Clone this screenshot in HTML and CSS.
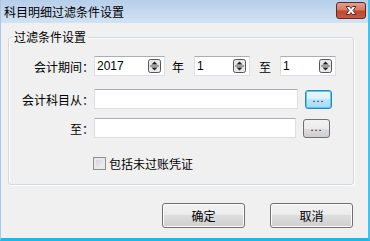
FILE: index.html
```html
<!DOCTYPE html>
<html>
<head>
<meta charset="utf-8">
<link rel="stylesheet" href="styles.css">
</head>
<body>
<div class="window">
  <div class="titlebar">
    <span class="title">科目明细过滤条件设置</span>
    <div class="close"><svg width="18" height="11" viewBox="0 0 18 11"><path d="M4 1.5 L7.5 1.5 L9 3.5 L10.5 1.5 L14 1.5 L11 5.5 L14 9.5 L10.5 9.5 L9 7.5 L7.5 9.5 L4 9.5 L7 5.5 Z" fill="#fff" stroke="#5a2a24" stroke-width="1" stroke-linejoin="round"/></svg></div>
  </div>
  <div class="client">
    <fieldset class="group">
      <legend>过滤条件设置</legend>
      <div class="row r1">
        <span class="label">会计期间：</span>
        <div class="spin w70"><span class="val">2017</span><span class="arrows"><svg width="13" height="14" viewBox="0 0 13 14"><rect x="0.5" y="0.5" width="12" height="13" rx="2" fill="#e8e8e8" stroke="#555"/><line x1="2" y1="7" x2="11" y2="7" stroke="#555"/><path d="M3.5 5.5 L6.5 2.5 L9.5 5.5 Z" fill="#222"/><path d="M3.5 8.5 L6.5 11.5 L9.5 8.5 Z" fill="#222"/></svg></span></div>
        <span class="unit">年</span>
        <div class="spin w55"><span class="val">1</span><span class="arrows"><svg width="13" height="14" viewBox="0 0 13 14"><rect x="0.5" y="0.5" width="12" height="13" rx="2" fill="#e8e8e8" stroke="#555"/><line x1="2" y1="7" x2="11" y2="7" stroke="#555"/><path d="M3.5 5.5 L6.5 2.5 L9.5 5.5 Z" fill="#222"/><path d="M3.5 8.5 L6.5 11.5 L9.5 8.5 Z" fill="#222"/></svg></span></div>
        <span class="unit to">至</span>
        <div class="spin w55"><span class="val">1</span><span class="arrows"><svg width="13" height="14" viewBox="0 0 13 14"><rect x="0.5" y="0.5" width="12" height="13" rx="2" fill="#e8e8e8" stroke="#555"/><line x1="2" y1="7" x2="11" y2="7" stroke="#555"/><path d="M3.5 5.5 L6.5 2.5 L9.5 5.5 Z" fill="#222"/><path d="M3.5 8.5 L6.5 11.5 L9.5 8.5 Z" fill="#222"/></svg></span></div>
      </div>
      <div class="row r2">
        <span class="label">会计科目从：</span>
        <div class="input w204"></div>
        <div class="dots focus">...</div>
      </div>
      <div class="row r3">
        <span class="label">至：</span>
        <div class="input w202"></div>
        <div class="dots">...</div>
      </div>
      <div class="row r4">
        <span class="check"></span>
        <span class="checktext">包括未过账凭证</span>
      </div>
    </fieldset>
    <div class="buttons">
      <div class="btn">确定</div>
      <div class="btn">取消</div>
    </div>
  </div>
</div>
</body>
</html>
```
FILE: styles.css
```css
* { box-sizing: border-box; }
html, body { margin: 0; padding: 0; }
body {
  width: 370px; height: 241px; overflow: hidden;
  font-family: "Noto Sans CJK SC", "Noto Sans", sans-serif;
  font-size: 12px; color: #000;
  background: #f0f0f0;
}
.window {
  width: 370px; height: 241px;
  display: flex; flex-direction: column;
  border-left: 1px solid #a6c6ec;
  border-right: 2px solid #40c4ee;
  border-bottom: 3px solid #1bb8e8;
  box-shadow: inset 0 -1px 0 #9cd0f0;
}
.titlebar {
  height: 23px;
  display: flex; align-items: center; justify-content: space-between;
  background: linear-gradient(#b7cfea, #d2e2f4);
  padding-left: 3px; padding-right: 2px;
}
.title { font-size: 12px; line-height: 14px; color: #000; }
.close {
  width: 30px; height: 17px; margin-top: -3px;
  border: 1px solid #5e2a24; border-radius: 3px;
  background: linear-gradient(#e3a08f 0%, #d67a64 45%, #c0482f 55%, #c55a42 100%);
  display: flex; align-items: center; justify-content: center;
}
.client {
  flex: 1; background: #f0f0f0;
  padding: 7px 14px 0 7px;
  display: flex; flex-direction: column;
}
.group {
  margin: 0; padding: 0 0 0 0;
  height: 155px;
  border: 1px solid #d3d8dc; border-radius: 3px;
  box-shadow: inset 1px 1px 0 #fff, 1px 1px 0 #fff;
}
.group legend {
  padding: 0 2px; margin-left: 3px;
  font-size: 12px; line-height: 14px;
}
.row { display: flex; align-items: center; }
.label { width: 85px; text-align: right; padding-right: 0; white-space: nowrap; }
.r1 { margin-top: 12px; height: 20px; }
.r2 { margin-top: 13px; height: 20px; }
.r3 { margin-top: 9px; height: 20px; }
.r4 { margin-top: 17px; padding-left: 84px; }
.spin, .input {
  height: 20px; background: #fff;
  border: 1px solid #dcdfe3; border-top-color: #abadb3;
  display: flex; align-items: center; justify-content: space-between;
}
.spin { padding-left: 2px; padding-right: 3px; font-family: "Liberation Sans", sans-serif; font-size: 12px; }
.arrows { display: flex; }
.w70 { width: 71px; }
.w55 { width: 56px; }
.w204 { width: 204px; }
.w202 { width: 202px; }
.unit { margin: 0 10px 0 7px; }
.unit.to { margin: 0 9px 0 9px; }
.dots {
  width: 27px; height: 19px; margin-left: 7px;
  border: 1px solid #707070; border-radius: 3px;
  background: linear-gradient(#f2f2f2 0%, #ebebeb 50%, #dddddd 50%, #cfcfcf 100%);
  font-family: "Liberation Sans", sans-serif; font-size: 11px;
  display: flex; align-items: center; justify-content: center;
  letter-spacing: 1px; line-height: 1; padding-bottom: 1px;
}
.dots.focus {
  border-color: #3c7fb1;
  box-shadow: inset 0 0 0 1px #48d0f6;
  background: linear-gradient(#eaf6fd 0%, #d9f0fc 50%, #bee6fd 50%, #a7d9f5 100%);
}
.check {
  width: 13px; height: 13px;
  border: 1px solid #8e8f8f;
  background: linear-gradient(135deg, #cbcfd5, #f6f6f6);
  box-shadow: inset 0 0 0 2px #e8e8e8;
}
.checktext { margin-left: 3px; }
.buttons {
  display: flex; justify-content: flex-end; gap: 25px;
  margin-top: 18px; padding-right: 1px;
}
.btn {
  width: 83px; height: 25px;
  border: 1px solid #707070; border-radius: 3px;
  background: linear-gradient(#f2f2f2 0%, #ebebeb 50%, #dddddd 50%, #cfcfcf 100%);
  box-shadow: inset 0 0 0 1px #fcfcfc;
  display: flex; align-items: center; justify-content: center;
}
```
